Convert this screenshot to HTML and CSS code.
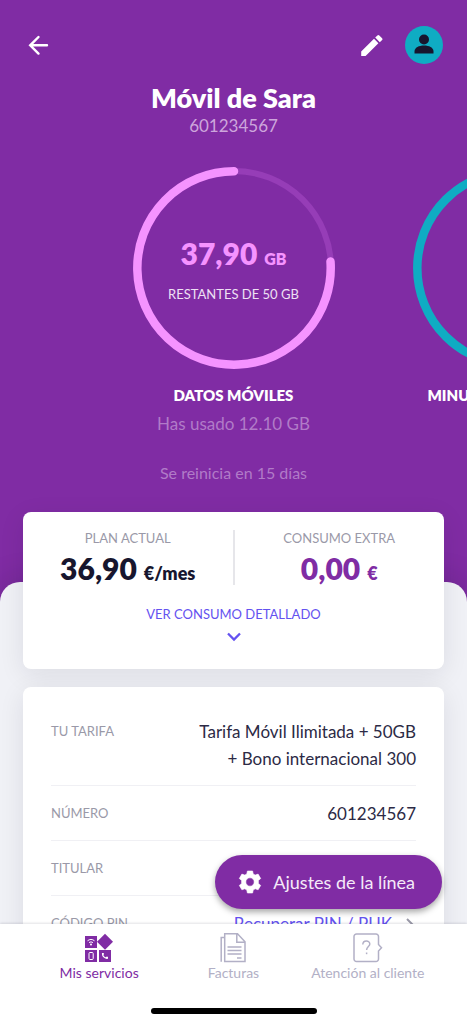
FILE: index.html
```html
<!DOCTYPE html>
<html lang="es">
<head>
<meta charset="utf-8">
<meta name="viewport" content="width=device-width, initial-scale=1">
<title>Móvil de Sara</title>
<link rel="stylesheet" href="styles.css">
</head>
<body>
<div class="app">
  <main class="content">
    <section class="hero">
      <header class="topbar">
        <button class="icon-btn" type="button" aria-label="Volver">
          <svg width="28" height="28" viewBox="0 0 28 28" fill="none" stroke="#fff" stroke-width="2.400" stroke-linecap="round"><path d="M23 14.300H7M14.500 6 6.200 14.300l8.300 8.300"/></svg>
        </button>
        <div class="topbar-actions">
          <button class="icon-btn" type="button" aria-label="Editar">
            <svg width="28" height="28" viewBox="0 0 28 28" fill="#fff"><path d="M4.200 20.600 17 7.800l4.400 4.400L8.600 25H4.200zM18.200 6.600l2.200-2.200a1.300 1.300 0 0 1 1.900 0l2.800 2.800a1.300 1.300 0 0 1 0 1.900L22.800 11.200z"/></svg>
          </button>
          <button class="avatar" type="button" aria-label="Perfil">
            <svg width="38" height="38" viewBox="0 0 38 38" fill="#17162e"><circle cx="19" cy="13.500" r="5"/><path d="M9.500 27.500v-2c0-4 4.500-6 9.500-6s9.500 2 9.500 6v2z"/></svg>
          </button>
        </div>
      </header>
      <h1 class="title">Móvil de Sara</h1>
      <p class="subtitle">601234567</p>
      <div class="carousel">
        <article class="usage">
          <div class="wheel">
            <svg class="ring" viewBox="0 0 202 202" fill="none"><circle cx="101" cy="101" r="97" stroke="#963db7" stroke-width="6"/><path d="M101 4.300A96.700 96.700 0 1 0 197.500 94.500" stroke="#f593ff" stroke-width="8.500" stroke-linecap="round"/></svg>
            <p class="amount pink">37,90 <span class="unit">GB</span></p>
            <p class="remaining">RESTANTES DE 50 GB</p>
          </div>
          <h2 class="usage-name">DATOS MÓVILES</h2>
          <p class="used">Has usado 12.10 GB</p>
          <p class="reset">Se reinicia en 15 días</p>
        </article>
        <article class="usage">
          <div class="wheel">
            <svg class="ring" viewBox="0 0 202 202" fill="none"><circle cx="101" cy="101" r="96.700" stroke="#0facc3" stroke-width="8.500"/></svg>
          </div>
          <h2 class="usage-name">MINUTOS DISPONIBLES</h2>
        </article>
      </div>
    </section>
    <section class="sheet">
      <div class="card plan">
        <div class="costs">
          <div class="cost">
            <h3 class="label">PLAN ACTUAL</h3>
            <p class="amount dark">36,90 <span class="unit">€/mes</span></p>
          </div>
          <div class="cost">
            <h3 class="label">CONSUMO EXTRA</h3>
            <p class="amount purple">0,00 <span class="unit">€</span></p>
          </div>
        </div>
        <button class="details-btn" type="button">VER CONSUMO DETALLADO
          <svg width="16" height="12" viewBox="0 0 16 12" fill="none" stroke="#6452f0" stroke-width="2.300"><path d="m2 2.500 6 6 6-6"/></svg>
        </button>
      </div>
      <dl class="card info">
        <div class="row"><dt class="label">TU TARIFA</dt><dd class="value">Tarifa Móvil Ilimitada + 50GB<br>+ Bono internacional 300</dd></div>
        <div class="row"><dt class="label">NÚMERO</dt><dd class="value">601234567</dd></div>
        <div class="row"><dt class="label">TITULAR</dt><dd class="value"></dd></div>
        <div class="row"><dt class="label">CÓDIGO PIN</dt><dd class="value"><a class="pin" href="#pin">Recuperar PIN / PUK
          <svg width="12" height="16" viewBox="0 0 12 16" fill="none" stroke="#9a99a8" stroke-width="2"><path d="m3 3 5 5-5 5"/></svg></a></dd></div>
      </dl>
    </section>
  </main>
  <button class="fab" type="button">
    <svg width="24" height="24" viewBox="0 0 24 24" fill="#fff" fill-rule="evenodd"><path d="M9.400 1h5.200l.6 3 2 1.100 2.900-1 2.600 4.400-2.300 2v2.900l2.300 2-2.600 4.400-2.900-1-2 1.200-.6 3H9.400l-.6-3-2-1.200-2.900 1-2.600-4.400 2.300-2v-2.900l-2.300-2 2.600-4.400 2.900 1 2-1.100zM12 7.800a4.200 4.200 0 1 0 0 8.400 4.200 4.200 0 0 0 0-8.400z" stroke="#fff" stroke-width=".6" stroke-linejoin="round"/></svg>
    Ajustes de la línea
  </button>
  <footer class="bottom">
    <nav class="tabs">
      <a class="tab active" href="#servicios">
        <svg width="30" height="30" viewBox="0 0 30 30" fill="#802ca4"><path d="M1 3h12v12H1zM1 17h12v12H1zM15 17h12v12H15zM21 .8 29 8.800l-8 8-8-8z"/><g fill="none" stroke="#fff"><path d="M3.500 7.800c2-1.800 5-1.800 7 0M5 9.700c1.200-1 2.800-1 4 0"/><rect x="5" y="19.500" width="4.200" height="7" rx="1"/><path d="M18.500 20.500c0 2.500 2 4.700 5 4.700" stroke-width="1.300"/></g><circle cx="7" cy="11.500" r="1" fill="#fff"/><path d="M18 20h1.800v1.700H18zM22 23.800h2v1.900h-2z" fill="#fff"/></svg>
        Mis servicios
      </a>
      <a class="tab" href="#facturas">
        <svg width="30" height="30" viewBox="0 0 30 30" fill="none" stroke="#b2b0c6" stroke-width="1.500"><path d="M6.700.8h12.800L27 8.700v19.800H6.700zM18.800.8v8.400H27M6.700 4.500H3.200v24.200M9.500 14h14M9.500 17.500h14M9.500 21h14M19 25h4.500"/></svg>
        Facturas
      </a>
      <a class="tab" href="#ayuda">
        <svg width="30" height="30" viewBox="0 0 30 30" fill="none" stroke="#b2b0c6" stroke-width="1.500"><path d="M3.500 1h19.500a2.500 2.500 0 0 1 2.500 2.500v8l3 3.300-3 3.300v7.900a2.500 2.500 0 0 1-2.500 2.500H3.500A2.500 2.500 0 0 1 1 26V3.500A2.500 2.500 0 0 1 3.500 1z"/><path d="M9.800 11.500c.2-4.500 7-4.500 7-.5 0 2.500-3.200 2.700-3.200 6"/><path d="M13.600 19.500v1.700"/></svg>
        Atención al cliente
      </a>
    </nav>
    <div class="home-indicator"></div>
  </footer>
</div>
</body>
</html>
```
FILE: styles.css
```css
* { box-sizing: border-box; }
body, h1, h2, h3, p, dl, dd { margin: 0; }
body { font-family: Lato, sans-serif; font-size: 18px; color: #17162e; }
button { font: inherit; border: 0; padding: 0; background: none; cursor: pointer; }
a { color: inherit; text-decoration: none; }
svg { display: block; flex: none; }

.app { position: relative; display: flex; flex-direction: column; height: 100vh; overflow: hidden; background: #f0f1f6; }
.content { flex: 1; min-height: 0; overflow: hidden; }

.hero { background: #802ca4; color: #fff; text-align: center; padding: 26px 0 120px; }
.topbar { display: flex; align-items: center; justify-content: space-between; padding: 0 24px; }
.topbar-actions { display: flex; align-items: center; gap: 20px; }
.avatar { width: 38px; height: 38px; border-radius: 50%; background: #0facc3; }
.title { margin-top: 17px; font-size: 27px; line-height: 34px; font-weight: 800; }
.subtitle { font-size: 17px; line-height: 22px; color: #cda6dc; }

.carousel { display: flex; margin-top: 30px; padding-left: calc(50% - 140px); overflow: hidden; }
.usage { flex: 0 0 280px; }
.wheel { position: relative; display: flex; flex-direction: column; align-items: center; justify-content: center; gap: 9px; width: 202px; height: 202px; margin: 0 auto; }
.ring { position: absolute; inset: 0; width: 100%; height: 100%; }
.amount { font-size: 30px; line-height: 36px; font-weight: 800; white-space: nowrap; }
.unit { font-size: 18px; }
.pink { color: #f593ff; }
.pink .unit { font-size: 16px; }
.dark { color: #17162e; }
.purple { color: #802ca4; }
.remaining { font-size: 13px; line-height: 16px; color: #eee0f4; }
.usage-name { margin-top: 16px; font-size: 15px; line-height: 20px; font-weight: 800; white-space: nowrap; }
.used { margin-top: 6px; font-size: 17px; line-height: 26px; color: #b17bc8; }
.reset { margin-top: 25px; font-size: 16px; line-height: 22px; color: #b17bc8; }

.sheet { position: relative; margin-top: -22px; padding: 0 23px; border-radius: 20px 20px 0 0; background: #f0f1f6; box-shadow: 0 0 32px rgba(23, 22, 46, 0.2); }
.card { border-radius: 8px; background: #fff; box-shadow: 0 6px 26px rgba(23, 22, 46, 0.09); }
.plan { position: relative; top: -70px; padding: 18px 0 26px; }
.costs { display: flex; text-align: center; }
.cost { flex: 1; height: 55px; }
.cost + .cost { border-left: 2px solid #e6e6ea; }
.label { font-size: 13px; line-height: 16px; font-weight: 400; color: #9a99a8; }
.cost .amount { margin-top: 5px; line-height: 34px; }
.details-btn { display: flex; flex-direction: column; align-items: center; gap: 8px; width: 100%; margin-top: 20px; font-size: 13px; line-height: 18px; color: #6452f0; }
.info { position: relative; margin-top: -52px; padding: 17px 28px 20px; }
.row { display: flex; justify-content: space-between; padding: 14px 0 13px; border-bottom: 1px solid #f0f0f4; }
.row .label { line-height: 27px; }
.value { min-height: 27px; font-size: 17px; line-height: 27px; text-align: right; color: #2c2a45; }
.pin { display: flex; align-items: center; gap: 12px; color: #6452f0; }

.fab { position: absolute; right: 25px; bottom: 115px; display: flex; align-items: center; gap: 11px; height: 54px; padding: 0 27px 0 23px; border-radius: 27px; background: #802ca4; color: #f5eaf9; font-size: 18px; box-shadow: 0 3px 6px rgba(0, 0, 0, 0.35); }

.bottom { position: relative; flex: none; height: 100px; background: #fff; box-shadow: 0 -1px 2px rgba(23, 22, 46, 0.12); }
.tabs { display: flex; padding: 9px 32px 0; justify-content: space-between; }
.tab { display: flex; flex: 1; flex-direction: column; align-items: center; gap: 1px; font-size: 14px; line-height: 18px; color: #b2b0c6; white-space: nowrap; }
.active { color: #802ca4; }
.home-indicator { width: 166px; height: 6px; margin: 26px auto 0; border-radius: 3px; background: #000; }
```
